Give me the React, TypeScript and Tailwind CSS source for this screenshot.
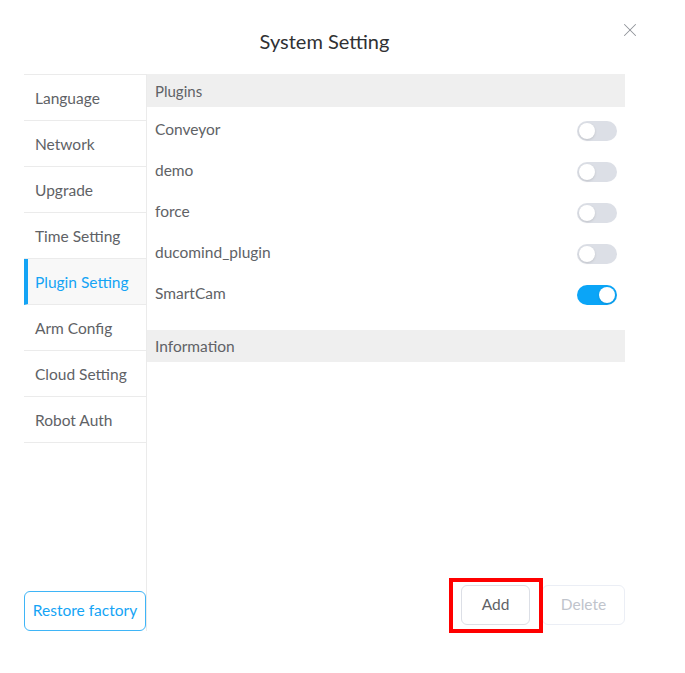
import { useState } from "react";
import { X } from "lucide-react";

const menu = [
  "Language",
  "Network",
  "Upgrade",
  "Time Setting",
  "Plugin Setting",
  "Arm Config",
  "Cloud Setting",
  "Robot Auth",
];

const initialPlugins = [
  { name: "Conveyor", on: false },
  { name: "demo", on: false },
  { name: "force", on: false },
  { name: "ducomind_plugin", on: false },
  { name: "SmartCam", on: true },
];

function Toggle({ on, onClick }: { on: boolean; onClick: () => void }) {
  return (
    <button
      onClick={onClick}
      className={
        "relative h-[20px] w-[40px] rounded-full transition-colors " +
        (on ? "bg-[#0ba5f7]" : "bg-[#dcdfe6]")
      }
    >
      <span
        className={
          "absolute top-[2px] h-[16px] w-[16px] rounded-full bg-white shadow-sm transition-all " +
          (on ? "left-[22px]" : "left-[2px]")
        }
      />
    </button>
  );
}

export default function App() {
  const [active, setActive] = useState("Plugin Setting");
  const [plugins, setPlugins] = useState(initialPlugins);

  const flip = (i: number) =>
    setPlugins((prev) => prev.map((p, j) => (j === i ? { ...p, on: !p.on } : p)));

  return (
    <div className="relative h-[673px] w-[685px] bg-white font-['Lato',sans-serif] text-[#606266]">
      <button className="absolute right-[44px] top-[19px] text-[#909399]">
        <X className="h-[22px] w-[22px]" strokeWidth={1.1} />
      </button>

      <div className="flex h-[74px] w-[625px] items-center justify-center pl-[24px] pt-[8px]">
        <h2 className="text-[20px] text-[#303133]">System Setting</h2>
      </div>

      <div className="ml-[24px] flex h-[557px] w-[601px]">
        {/* sidebar */}
        <div className="flex w-[123px] flex-col justify-between border-r border-[#ebebeb]">
          <ul className="border-t border-[#ebebeb]">
            {menu.map((m) => (
              <li
                key={m}
                onClick={() => setActive(m)}
                className={
                  "flex h-[46px] cursor-pointer items-center border-b border-[#ebebeb] pt-[2px] text-[15.5px] " +
                  (active === m
                    ? "border-l-[4px] border-l-[#14a4f5] bg-[#f8f8f8] pl-[7px] text-[#14a4f5]"
                    : "pl-[11px]")
                }
              >
                {m}
              </li>
            ))}
          </ul>
          <button className="h-[40px] w-[122px] rounded-[6px] border border-[#3fb5f7] text-[15.5px] text-[#14a4f5]">
            Restore factory
          </button>
        </div>

        {/* content */}
        <div className="flex flex-1 flex-col">
          <div className="flex h-[33px] items-center bg-[#efefef] pl-[8px] pt-[1px] text-[15px]">
            Plugins
          </div>
          <div className="pt-[3px]">
            {plugins.map((p, i) => (
              <div key={p.name} className="flex h-[41px] items-center justify-between pl-[8px] pr-[8px] text-[15.5px]">
                <span className="-mt-[2px]">{p.name}</span>
                <Toggle on={p.on} onClick={() => flip(i)} />
              </div>
            ))}
          </div>
          <div className="mt-[15px] flex h-[32px] items-center bg-[#efefef] pl-[8px] pt-[1px] text-[15.5px]">
            Information
          </div>

          <div className="mt-auto mb-[6px] flex justify-end gap-[12px]">
            <div className="relative">
              <button className="h-[40px] w-[69px] rounded-[6px] border border-[#dcdfe6] text-[15.5px] text-[#606266]">
                Add
              </button>
              <div className="pointer-events-none absolute -left-[12px] -right-[13px] -top-[7px] -bottom-[8px] border-[4px] border-[#ff0000]" />
            </div>
            <button className="h-[40px] w-[83px] rounded-[6px] border border-[#ebeef5] text-[15.5px] text-[#c0c4cc]">
              Delete
            </button>
          </div>
        </div>
      </div>
    </div>
  );
}
